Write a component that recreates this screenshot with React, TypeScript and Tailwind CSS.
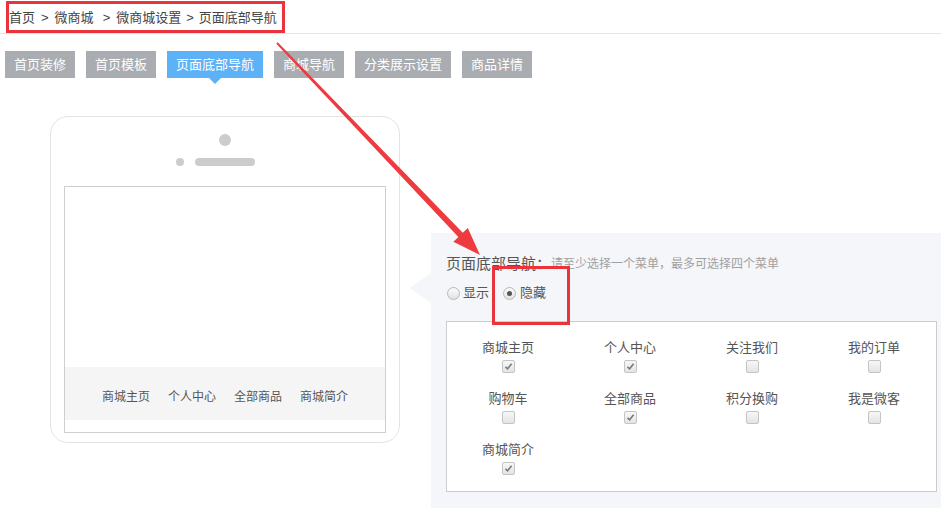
import { FC } from "react";

const tabs = ["首页装修", "首页模板", "页面底部导航", "商城导航", "分类展示设置", "商品详情"];

const menus = [
  { name: "商城主页", on: true },
  { name: "个人中心", on: true },
  { name: "关注我们", on: false },
  { name: "我的订单", on: false },
  { name: "购物车", on: false },
  { name: "全部商品", on: true },
  { name: "积分换购", on: false },
  { name: "我是微客", on: false },
  { name: "商城简介", on: true },
];

const Check: FC<{ on: boolean }> = ({ on }) => (
  <div className="w-[13px] h-[13px] rounded-[2px] border border-[#c4c4c4] bg-gradient-to-b from-[#f7f7f7] to-[#e4e4e4] flex items-center justify-center">
    {on && (
      <svg width="9" height="9" viewBox="0 0 9 9">
        <path d="M1.5 4.8 L3.6 6.8 L7.6 1.8" fill="none" stroke="#7a7a7a" strokeWidth="1.6" />
      </svg>
    )}
  </div>
);

const Radio: FC<{ on: boolean }> = ({ on }) => (
  <div className="w-[13px] h-[13px] rounded-full border border-[#b8b8b8] bg-gradient-to-b from-[#fbfbfb] to-[#e2e2e2] flex items-center justify-center">
    {on && <div className="w-[5px] h-[5px] rounded-full bg-[#555]" />}
  </div>
);

const App: FC = () => {
  return (
    <div className="relative w-[941px] h-[508px] overflow-hidden bg-white text-[#444] font-['Liberation_Sans','Noto_Sans_CJK_SC',sans-serif]">
      {/* Breadcrumb */}
      <div className="h-[34px] border-b border-[#e6e6e6] pl-[9px] flex items-center text-[13px] leading-[16px] pt-[3px]">
        <span>首页</span>
        <span className="mx-[6px]">&gt;</span>
        <span>微商城</span>
        <span className="ml-[9px] mr-[6px]">&gt;</span>
        <span>微商城设置</span>
        <span className="mx-[5px]">&gt;</span>
        <span>页面底部导航</span>
      </div>

      {/* Tabs */}
      <div className="mt-[17px] pl-[5px] flex gap-[11px]">
        {tabs.map((t, i) => (
          <div
            key={t}
            className={`relative h-[27px] px-[9px] flex items-center text-[13px] leading-[16px] text-white ${
              i === 2 ? "bg-[#5db1f6]" : "bg-[#a9acb0]"
            }`}
          >
            {t}
            {i === 2 && (
              <div className="absolute left-1/2 -translate-x-1/2 top-[27px] w-0 h-0 border-l-[6px] border-r-[6px] border-t-[6px] border-l-transparent border-r-transparent border-t-[#5db1f6]" />
            )}
          </div>
        ))}
      </div>

      {/* Content */}
      <div className="flex items-start">
        {/* Phone preview */}
        <div className="ml-[50px] mt-[38px] w-[350px] h-[327px] border border-[#e3e3e3] rounded-[18px] flex flex-col">
          <div className="mt-[17px] self-center w-[12px] h-[12px] rounded-full bg-[#cccccc]" />
          <div className="mt-[12px] ml-[125px] flex items-center gap-[11px]">
            <div className="w-[8px] h-[8px] rounded-full bg-[#cccccc]" />
            <div className="w-[60px] h-[8px] rounded-full bg-[#cccccc]" />
          </div>
          <div className="mt-[20px] mx-[13px] h-[247px] border border-[#cfcfcf] flex flex-col">
            <div className="h-[180px]" />
            <div className="h-[53px] bg-[#f5f5f5] flex items-center justify-center gap-[18px] text-[12px] leading-[16px] text-[#555] pt-[6px]">
              <span>商城主页</span>
              <span>个人中心</span>
              <span>全部商品</span>
              <span>商城简介</span>
            </div>
          </div>
        </div>

        {/* Settings panel */}
        <div className="relative ml-[31px] mt-[155px] flex-1 h-[290px] bg-[#f5f6f9] pl-[15px] pt-[21px]">
          <div className="absolute left-[-21px] top-[40px] w-0 h-0 border-t-[15px] border-b-[15px] border-r-[21px] border-t-transparent border-b-transparent border-r-[#f5f6f9]" />
          <div className="flex items-center h-[20px]">
            <span className="text-[15px] leading-[20px] text-[#555]">页面底部导航：</span>
            <span className="text-[12px] leading-[16px] text-[#a0a0a0]">请至少选择一个菜单，最多可选择四个菜单</span>
          </div>
          <div className="mt-[9px] h-[20px] flex items-center text-[13px] leading-[16px] text-[#555]">
            <div className="ml-[1px]">
              <Radio on={false} />
            </div>
            <span className="ml-[3px]">显示</span>
            <div className="ml-[14px]">
              <Radio on={true} />
            </div>
            <span className="ml-[4px]">隐藏</span>
          </div>
          <div className="mt-[18px] w-[491px] bg-white border border-[#cccccc] grid grid-cols-[repeat(4,122px)] gap-y-[18px] pt-[18px] pb-[16px]">
            {menus.map((m) => (
              <div key={m.name} className="flex flex-col items-center">
                <span className="text-[13px] leading-[16px] text-[#555]">{m.name}</span>
                <div className="mt-[4px]">
                  <Check on={m.on} />
                </div>
              </div>
            ))}
          </div>
        </div>
      </div>

      {/* Annotation: highlight boxes and arrow */}
      <div className="absolute left-[6px] top-[1px] w-[279px] h-[32px] border-[3px] border-[#e8343a]" />
      <div className="absolute left-[492px] top-[266px] w-[78px] h-[59px] border-[3px] border-[#e8343a]" />
      <svg className="absolute left-0 top-0 pointer-events-none" width="941" height="508" viewBox="0 0 941 508">
        <polygon
          points="276.3,43.7 458.4,236.9 453.4,241.7 480,255 467.8,227.9 462.8,232.7 277.7,42.3"
          fill="#ee3b3f"
        />
      </svg>
    </div>
  );
};

export default App;
